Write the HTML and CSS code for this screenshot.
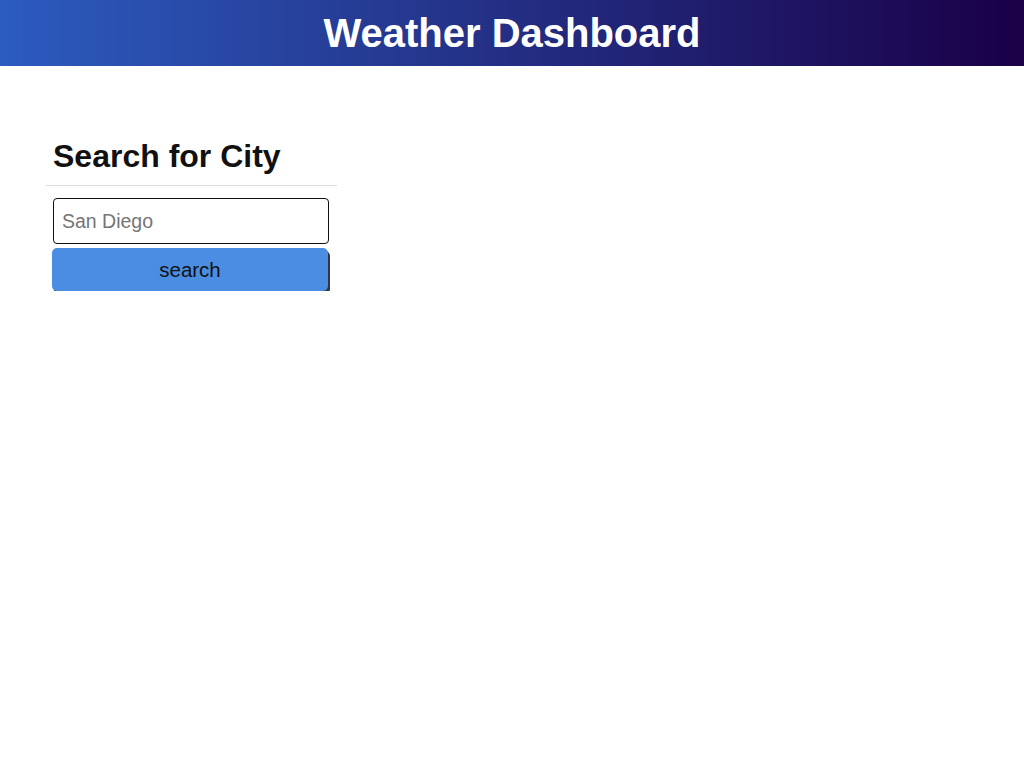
FILE: index.html
```html
<!DOCTYPE html>
<html>
<head>
<meta charset="utf-8">
<link rel="stylesheet" href="styles.css">
</head>
<body>
<header class="topbar">
  <h1 class="title">Weather Dashboard</h1>
</header>
<main class="content">
  <section class="search-panel">
    <h2 class="search-heading">Search for City</h2>
    <hr class="divider">
    <input class="city-input" type="text" placeholder="San Diego">
    <button class="search-btn">search</button>
  </section>
</main>
</body>
</html>
```

FILE: styles.css
```css
* { box-sizing: border-box; }
body {
  margin: 0;
  font-family: "Liberation Sans", Arial, sans-serif;
  background: #fff;
  color: #111;
}
.topbar {
  height: 66px;
  background: linear-gradient(to right, #2c5cbf, #1a0047);
  display: flex;
  align-items: center;
  justify-content: center;
}
.title {
  margin: 0;
  color: #fff;
  font-size: 40px;
  font-weight: bold;
}
.content {
  padding: 66px 0 0 46px;
}
.search-panel {
  width: 291px;
  display: flex;
  flex-direction: column;
}
.search-heading {
  margin: 5px 0 0 7px;
  font-size: 32px;
  font-weight: bold;
  line-height: 38px;
}
.divider {
  margin: 10px 0 12px 0;
  border: 0;
  border-top: 1px solid #dddddd;
  width: 291px;
}
.city-input {
  margin-left: 7px;
  width: 276px;
  height: 46px;
  border: 1px solid #111;
  border-radius: 4px;
  padding: 0 8px;
  font-family: "Liberation Sans", Arial, sans-serif;
  font-size: 19.5px;
  color: #333;
}
.city-input::placeholder { color: #757575; }
.search-btn {
  margin: 4px 0 0 6px;
  width: 276px;
  height: 43px;
  background: #4a8de2;
  border: 0;
  border-radius: 5px;
  box-shadow: 2px 3px 0 #33363c;
  font-family: "Liberation Sans", Arial, sans-serif;
  font-size: 20.5px;
  color: #111;
}
```
